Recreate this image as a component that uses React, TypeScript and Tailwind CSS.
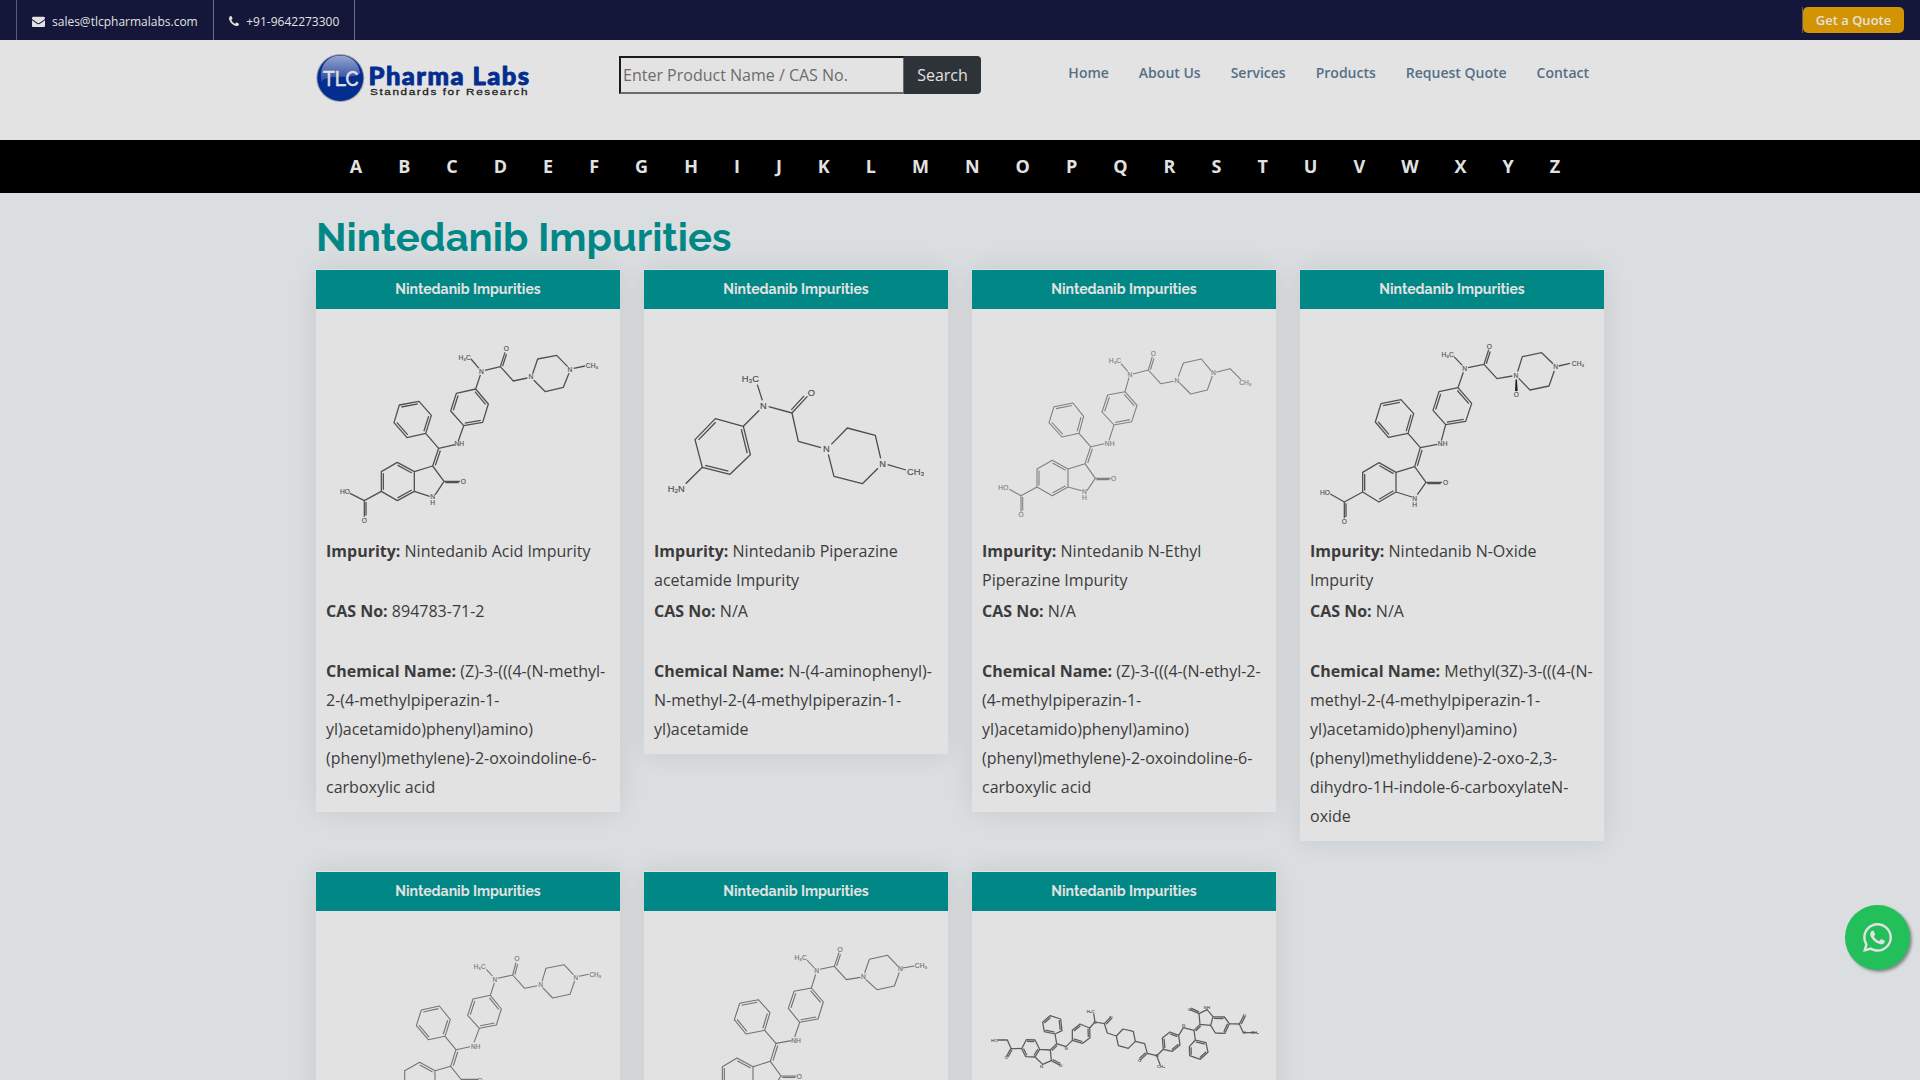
import { FaWhatsapp } from "react-icons/fa";

type Bond = [number, number, number, number, number?];
type Label = [number, number, string];

interface Molecule {
  x: number;
  y: number;
  stroke: string;
  width: number;
  path: string;
  doubles: Bond[];
  labels: Label[];
  size: number;
  wedge?: string;
}

// Second line of a double bond, shifted sideways by `off` and slightly shortened.
function second([x1, y1, x2, y2, off = 7]: Bond): string {
  const dx = x2 - x1;
  const dy = y2 - y1;
  const len = Math.hypot(dx, dy);
  const nx = (-dy / len) * off;
  const ny = (dx / len) * off;
  const t = 0.08;
  return `M${x1 + nx + dx * t} ${y1 + ny + dy * t}L${x2 + nx - dx * t} ${y2 + ny - dy * t}`;
}

const acid: Molecule = {
  x: 18, y: 147, stroke: "#515151", width: 3.9, size: 20,
  path:
    "M268 435L327 424L364 466L347 520L291 533L252 488Z M347 520L386 565L435 554 M386 565L368 618L402 664L376 704 M402 664H450 M359 709L313 694V635L368 618 M313 635L262 607L214 635V694L262 722L313 694 M214 694L163 722L120 700 M163 722V770 M445 543L461 497L518 487L535 432L497 387L439 400L422 453L461 497 M497 387L511 345 M507 325L483 297 M525 331L571 320L585 277 M571 320L610 363L652 354 M668 341L683 297L740 286L773 320 M777 340L760 382L706 395L671 360 M791 325L825 318",
  doubles: [[268, 435, 327, 424], [364, 466, 347, 520], [291, 533, 252, 488], [386, 565, 368, 618, -7], [402, 664, 450, 664, 4], [313, 635, 262, 607, -7], [214, 635, 214, 694, -6], [262, 722, 313, 694, -7], [163, 722, 163, 770, -5], [461, 497, 518, 487, -7], [535, 432, 497, 387, -7], [439, 400, 422, 453, -7], [571, 320, 585, 277, 6]],
  labels: [[448, 552, "NH"], [460, 665, "O"], [368, 711, "N"], [368, 729, "H"], [105, 695, "HO"], [163, 782, "O"], [514, 335, "N"], [464, 292, "H₃C"], [589, 267, "O"], [663, 351, "N"], [780, 328, "N"], [846, 318, "CH₃"]],
};

const piperazine: Molecule = {
  x: 12, y: 147, stroke: "#4c4c4c", width: 3.9, size: 28,
  path:
    "M226 476L310 499L331 584L270 643L187 622L165 539Z M187 622L137 671 M310 499L358 451 M367 421L352 374 M386 440L456 459L475 544L543 563 M456 459L502 409 M574 553L622 504L706 526L722 595 M714 625L667 671L582 649L565 583 M743 614L798 630",
  doubles: [[226, 476, 165, 539, -8], [310, 499, 331, 584, 8], [270, 643, 187, 622, 8], [456, 459, 502, 409, -8]],
  labels: [[370, 437, "N"], [331, 356, "H₃C"], [514, 399, "O"], [559, 566, "N"], [728, 612, "N"], [827, 634, "CH₃"], [109, 685, "H₂N"]],
};

const ethyl: Molecule = {
  x: 21, y: 147, stroke: "#808080", width: 3.3, size: 20,
  path:
    "M267 440L324 429L356 469L342 520L291 531L252 488Z M342 520L377 560L418 551 M377 560L360 611L391 655L366 692 M391 655H437 M350 692L309 681V627L360 611 M309 627L262 601L216 627V681L262 707L309 681 M216 681L168 707L133 688 M168 707V755 M432 541L447 495L500 485L516 436L480 395L428 405L411 456L447 495 M480 395L492 353 M488 334L468 311 M504 342L550 330L562 290 M550 330L587 371L626 364 M640 350L655 309L709 297L738 332 M742 348L727 390L677 402L643 368 M754 337L795 326L828 359",
  doubles: [[267, 440, 324, 429], [356, 469, 342, 520], [291, 531, 252, 488], [377, 560, 360, 611, -7], [391, 655, 437, 655, 4], [309, 627, 262, 601, -7], [216, 627, 216, 681, -6], [262, 707, 309, 681, -7], [168, 707, 168, 755, -5], [447, 495, 500, 485, -7], [516, 436, 480, 395, -7], [428, 405, 411, 456, -7], [550, 330, 562, 290, 6]],
  labels: [[434, 550, "NH"], [446, 656, "O"], [358, 696, "N"], [358, 713, "H"], [115, 682, "HO"], [168, 764, "O"], [495, 344, "N"], [450, 303, "H₃C"], [565, 281, "O"], [636, 361, "N"], [745, 339, "N"], [841, 369, "CH₃"]],
};

const oxide: Molecule = {
  x: 30, y: 147, stroke: "#515151", width: 3.9, size: 20,
  path:
    "M273 431L333 419L371 461L354 520L295 532L256 486Z M354 520L391 563L442 553 M391 563L374 620L408 667L382 704 M408 667H456 M366 711L318 696V637L374 620 M318 637L267 608L218 637V696L267 726L318 696 M218 696L163 726L121 702 M163 726V775 M454 542L467 494L527 484L545 430L504 383L447 395L429 451L467 494 M504 383L520 337 M517 316L492 290 M534 323L582 313L596 269 M582 313L621 356L667 348 M683 335L697 290L755 278L789 311 M793 332L777 378L720 390L686 355 M806 318L840 310 M679 358V394",
  doubles: [[273, 431, 333, 419], [371, 461, 354, 520], [295, 532, 256, 486], [391, 563, 374, 620, -7], [408, 667, 456, 667, 4], [318, 637, 267, 608, -7], [218, 637, 218, 696, -6], [267, 726, 318, 696, -7], [163, 726, 163, 775, -5], [467, 494, 527, 484, -7], [545, 430, 504, 383, -7], [447, 395, 429, 451, -7], [582, 313, 596, 269, 6]],
  labels: [[458, 552, "NH"], [467, 668, "O"], [374, 715, "N"], [374, 733, "H"], [105, 697, "HO"], [163, 786, "O"], [524, 327, "N"], [473, 283, "H₃C"], [598, 259, "O"], [678, 346, "N"], [797, 321, "N"], [864, 310, "CH₃"], [679, 405, "O"]],
  wedge: "M677 360H681L683 393H675Z",
};

const esterA: Molecule = {
  x: 18, y: 153, stroke: "#757575", width: 3.3, size: 19,
  path:
    "M334 450L388 438L421 479L405 529L355 539L319 497Z M405 529L438 569L480 560 M438 569L422 619L455 660L431 694 M455 658H505 M415 695L375 682V632L422 619 M375 632L329 607L284 632V682L329 707L375 682 M492 547L508 505L559 495L574 447L541 406L489 417L473 466L508 505 M541 406L553 369 M547 348L529 328 M563 355L608 345L618 308 M608 345L644 385L682 377 M696 364L708 325L762 314L790 344 M794 363L780 403L728 414L698 383 M807 349L836 343",
  doubles: [[334, 450, 388, 438], [421, 479, 405, 529], [355, 539, 319, 497], [438, 569, 422, 619, -7], [375, 632, 329, 607, -7], [508, 505, 559, 495, -7], [574, 447, 541, 406, -7], [489, 417, 473, 466, -7], [608, 345, 618, 308, 6]],
  labels: [[497, 559, "NH"], [510, 662, "O"], [554, 358, "N"], [509, 319, "H₃C"], [621, 297, "O"], [692, 375, "N"], [797, 352, "N"], [856, 343, "CH₃"]],
};

const esterB: Molecule = {
  x: 12, y: 153, stroke: "#707070", width: 3.3, size: 20,
  path:
    "M299 430L355 419L390 458L374 511L318 522L283 479Z M374 511L408 550L454 542 M408 550L391 604L423 648L400 684 M423 648H470 M383 686L339 674V620L391 604 M339 620L291 594L247 620V674L291 700L339 674 M464 531L479 487L534 477L550 426L514 384L462 394L445 445L479 487 M514 384L527 343 M523 324L501 300 M540 328L583 319L597 278 M583 319L619 359L661 352 M674 339L688 298L743 286L775 320 M778 337L763 378L711 389L677 358 M788 324L823 318",
  doubles: [[299, 430, 355, 419], [390, 458, 374, 511], [318, 522, 283, 479], [408, 550, 391, 604, -7], [423, 648, 470, 648, 4], [339, 620, 291, 594, -7], [247, 620, 247, 674, -6], [479, 487, 534, 477, -7], [550, 426, 514, 384, -7], [462, 394, 445, 445, -7], [583, 319, 597, 278, 6]],
  labels: [[468, 541, "NH"], [478, 649, "O"], [530, 333, "N"], [482, 292, "H₃C"], [600, 268, "O"], [670, 350, "N"], [781, 327, "N"], [843, 317, "CH₃"]],
};

const dimer: Molecule = {
  x: 21, y: 153, stroke: "#5c5c5c", width: 3.8, size: 13,
  path:
    "M97 540H127L138 565L170 566 M138 565L124 590 M170 566L184 539L210 540L224 568L210 591L182 590Z M224 568L256 570L259 602L233 613L210 591 M259 602L286 616 M256 570L275 551L303 560 M275 551L270 522L291 512L287 477L255 467L233 487L238 515L270 522 M303 560L322 541L353 550L375 533L374 504L345 492L322 511V541 M374 504L390 486L386 460 M390 486L418 491L438 470 M418 491L427 519L454 528L474 507L505 514L511 544L490 565L460 557L454 528 M511 544L539 551L547 580L525 601 M547 580L575 587L586 616 M575 587L595 568L592 534L615 516L641 526L645 555L622 574L595 568 M641 526L655 503L687 511L705 493L702 461L726 449L744 470L737 496L705 493 M702 461L674 448 M744 470L778 471L793 491L780 520L751 519L737 496 M793 491L823 492L837 466 M823 492L835 518H876 M687 511L691 540L673 560L674 587L706 598L729 577L723 548L691 540",
  doubles: [[184, 539, 210, 540, 5], [224, 568, 210, 591, 5], [182, 590, 170, 566, 5], [138, 565, 124, 590, -5], [259, 602, 286, 616, -5], [256, 570, 275, 551, 5], [291, 512, 287, 477, -5], [255, 467, 233, 487, -5], [238, 515, 270, 522, -5], [322, 541, 353, 550, -5], [375, 533, 374, 504, -5], [345, 492, 322, 511, -5], [418, 491, 438, 470, 5], [547, 580, 525, 601, 5], [595, 568, 592, 534, 5], [615, 516, 641, 526, 5], [645, 555, 622, 574, 5], [702, 461, 674, 448, 5], [687, 511, 705, 493, 5], [744, 470, 778, 471, 5], [793, 491, 780, 520, 5], [823, 492, 837, 466, 5], [673, 560, 674, 587, -5], [706, 598, 729, 577, -5], [723, 548, 691, 540, -5]],
  labels: [[88, 540, "HO"], [124, 592, "O"], [230, 619, "N"], [287, 617, "O"], [304, 566, "N"], [390, 486, "N"], [377, 454, "H₃C"], [438, 471, "O"], [524, 602, "O"], [576, 587, "N"], [588, 619, "CH₃"], [656, 497, "N"], [726, 443, "NH"], [674, 448, "O"], [838, 466, "O"], [838, 518, "O"], [869, 518, "CH₃"]],
};

function Structure({ m }: { m: Molecule }) {
  return (
    <svg className="block h-[228px] w-full" viewBox={`${m.x} ${m.y} 912 684`}>
      <g fill="none" stroke={m.stroke} strokeWidth={m.width} strokeLinejoin="round">
        <path d={m.path} />
        <path d={m.doubles.map(second).join("")} />
      </g>
      {m.wedge && <path d={m.wedge} fill="#222" />}
      <g
        fill={m.stroke}
        stroke={m.stroke}
        strokeWidth="0.4"
        fontFamily="Liberation Sans, sans-serif"
        fontSize={m.size}
        textAnchor="middle"
      >
        {m.labels.map(([x, y, t], i) => (
          <text key={i} x={x} y={y + m.size * 0.36}>{t}</text>
        ))}
      </g>
    </svg>
  );
}

const products = [
  { m: acid, name: "Nintedanib Acid Impurity", cas: "894783-71-2", chem: "(Z)-3-(((4-(N-methyl-2-(4-methylpiperazin-1-yl)acetamido)phenyl)amino)(phenyl)methylene)-2-oxoindoline-6-carboxylic acid" },
  { m: piperazine, name: "Nintedanib Piperazine acetamide Impurity", cas: "N/A", chem: "N-(4-aminophenyl)-N-methyl-2-(4-methylpiperazin-1-yl)acetamide" },
  { m: ethyl, name: "Nintedanib N-Ethyl Piperazine Impurity", cas: "N/A", chem: "(Z)-3-(((4-(N-ethyl-2-(4-methylpiperazin-1-yl)acetamido)phenyl)amino)(phenyl)methylene)-2-oxoindoline-6-carboxylic acid" },
  { m: oxide, name: "Nintedanib N-Oxide Impurity", cas: "N/A", chem: "Methyl(3Z)-3-(((4-(N-methyl-2-(4-methylpiperazin-1-yl)acetamido)phenyl)amino)(phenyl)methyliddene)-2-oxo-2,3-dihydro-1H-indole-6-carboxylateN-oxide" },
  { m: esterA },
  { m: esterB },
  { m: dimer },
];

function Card({ p }: { p: (typeof products)[number] }) {
  return (
    <article className="bg-[#e2e2e2] pt-px shadow-[0_0_25px_rgba(0,0,0,0.09)]">
      <h4 className="flex h-[39px] items-center justify-center bg-[#008786] font-['Raleway','Lato',sans-serif] text-[14px] font-bold text-[#e2e2e2]">
        Nintedanib Impurities
      </h4>
      <Structure m={p.m} />
      {p.name && (
        <div className="px-2.5 pb-[9.8px] text-[16px] leading-[28.8px]">
          <p className="h-[60px]"><b>Impurity:</b> {p.name}</p>
          <p className="h-[60px]"><b>CAS No:</b> {p.cas}</p>
          <p className="mt-[0.4px] leading-[28.9px]"><b>Chemical Name:</b> {p.chem}</p>
        </div>
      )}
    </article>
  );
}

function Logo() {
  return (
    <svg className="mt-[13px] h-[51px] w-[216px]" viewBox="0 0 216 51">
      <defs>
        <linearGradient id="gloss" x1="0" y1="0" x2="0" y2="1">
          <stop offset="0" stopColor="#98a6cf" />
          <stop offset="1" stopColor="#2546a0" />
        </linearGradient>
      </defs>
      <circle cx="24.3" cy="25" r="24" fill="#9da1a8" />
      <circle cx="24.3" cy="25" r="23" fill="#032e8f" />
      <path d="M5 20C6 9 14 2.500 24.300 2.500S43 9 44 20C38 27 12 20 5 29Z" fill="url(#gloss)" />
      <text x="7" y="32.500" textLength="35.500" lengthAdjust="spacingAndGlyphs" fill="#e2e2e2" stroke="#e2e2e2" strokeWidth="0.5" fontFamily="Raleway, Lato, sans-serif" fontWeight="500" fontSize="20">TLC</text>
      <text x="52.500" y="32" textLength="160.500" lengthAdjust="spacing" fill="#032e8f" stroke="#032e8f" strokeWidth="0.900" strokeLinejoin="round" fontFamily="Lato, sans-serif" fontWeight="900" fontSize="25.500">Pharma Labs</text>
      <g transform="translate(54 41.5) scale(1.4 1)">
        <text textLength="112.500" lengthAdjust="spacing" fill="#1c1c1c" stroke="#1c1c1c" strokeWidth="0.250" fontFamily="Liberation Sans, sans-serif" fontSize="8.400">Standards for Research</text>
      </g>
    </svg>
  );
}

export default function App() {
  return (
    <div className="relative h-[1080px] w-full overflow-hidden bg-[#dadee1] font-['Open_Sans',sans-serif] text-[#3c3c3c]">
      <div className="flex h-10 justify-between bg-[#14163a] pr-4 pl-4 text-[12px] text-[#e2e2e2]">
        <div className="flex">
          <span className="flex items-center border-l border-[#5a5b75] pt-[3px] pr-[15px] pl-[15px]">
            <svg className="mr-[7px] h-[13px] w-[13px]" viewBox="0 0 1792 1792" fill="currentColor">
              <path d="M1792 710v794q0 66-47 113t-113 47H160q-66 0-113-47T0 1504V710q44 49 101 87 362 246 497 345 57 42 92.500 65.500t94.500 48 110 24.500h2q51 0 110-24.500t94.500-48T1194 1142q170-123 498-345 57-39 100-87zm0-294q0 79-49 151t-122 123q-376 261-468 325-10 7-42.500 30.500t-54 38-52 32.500-57.500 27-50 9h-2q-23 0-50-9t-57.500-27-52-32.500-54-38T639 1015q-91-64-262-182.500T172 690q-62-42-117-115.500T0 438q0-78 41.500-130T160 256h1472q65 0 112.500 47t47.500 113z" />
            </svg>
            sales@tlcpharmalabs.com
          </span>
          <span className="flex items-center border-x border-x-[#6d6e86] pt-[3px] pr-[14.5px] pl-[15px]">
            <svg className="mr-[7.5px] h-[13px] w-[10px]" viewBox="0 0 1408 1792" fill="currentColor">
              <path d="M1408 1240q0 27-10 70.500t-21 68.500q-21 50-122 106-94 51-186 51-27 0-53-3.500t-57.500-12.500-47-14.500T856 1485t-49-18q-98-35-175-83-127-79-264-216T152 904q-48-77-83-175-3-9-18-49t-20.500-55.500-14.500-47T3.500 520 0 467q0-92 51-186 56-101 106-122 25-11 68.500-21t70.500-10q14 0 21 3 18 6 53 76 11 19 30 54t35 63.500 31 53.500q3 4 17.500 25t21.500 35.500 7 28.500q0 20-28.500 50t-62 55-62 53-28.500 46q0 9 5 22.500t8.500 20.500 14 24 11.500 19q76 137 174 235t235 174q2 1 19 11.500t24 14 20.500 8.500 22.500 5q18 0 46-28.500t53-62 55-62 50-28.500q14 0 28.500 7t35.500 21.500 25 17.500q25 15 53.500 31t63.500 35 54 30q70 35 76 53 3 7 3 21z" />
            </svg>
            +91-9642273300
          </span>
        </div>
        <div className="mt-[7px] h-[26px] border-l border-[#5a5b75]">
          <a className="flex h-[26px] w-[101px] items-center justify-center rounded-[5px] bg-[#d39404] pt-px text-[13px] font-semibold">Get a Quote</a>
        </div>
      </div>

      <header className="h-[100px] bg-[#e3e3e3]">
        <div className="mx-auto flex w-[1288px] items-start">
          <Logo />
          <div className="mt-4 ml-[87px] flex h-[38px] w-[362px] text-[16px]">
            <div className="flex w-[286px] items-center border-2 border-t-[#1b1b1b] border-r-[#6a6a6a] border-b-[#6a6a6a] border-l-[#1b1b1b] pl-[2px] text-[#6c6c6c]">
              Enter Product Name / CAS No.
            </div>
            <button className="-ml-px w-[77px] rounded-r bg-[#2e3339] text-[#e2e2e2]">Search</button>
          </div>
          <nav className="mt-[22px] ml-auto flex gap-[30px] pr-[15px] text-[14px] leading-[21px] font-semibold text-[#556f86]">
            <a>Home</a><a>About Us</a><a>Services</a><a>Products</a><a>Request Quote</a><a>Contact</a>
          </nav>
        </div>
      </header>

      <div className="flex h-[53px] items-center justify-center gap-[36px] bg-black pr-[10px] text-[18px] font-bold text-[#e2e2e2]">
        {"ABCDEFGHIJKLMNOPQRSTUVWXYZ".split("").map((c) => <a key={c}>{c}</a>)}
      </div>

      <main className="mx-auto w-[1288px]">
        <h1 className="flex h-[76px] items-center pt-3 font-['Raleway','Lato',sans-serif] text-[40px] leading-[48px] font-bold whitespace-nowrap text-[#018786]">
          Nintedanib Impurities
        </h1>
        <div className="grid grid-cols-4 items-start gap-x-6 gap-y-[30.4px]">
          {products.map((p, i) => <Card key={i} p={p} />)}
        </div>
      </main>

      <a className="absolute top-[905px] left-[1845px] flex h-[65px] w-[65px] items-center justify-center rounded-full bg-[#22bf5b] text-[#e2e2e2] shadow-[2px_2px_3px_#888]">
        <FaWhatsapp size={33} />
      </a>
    </div>
  );
}
